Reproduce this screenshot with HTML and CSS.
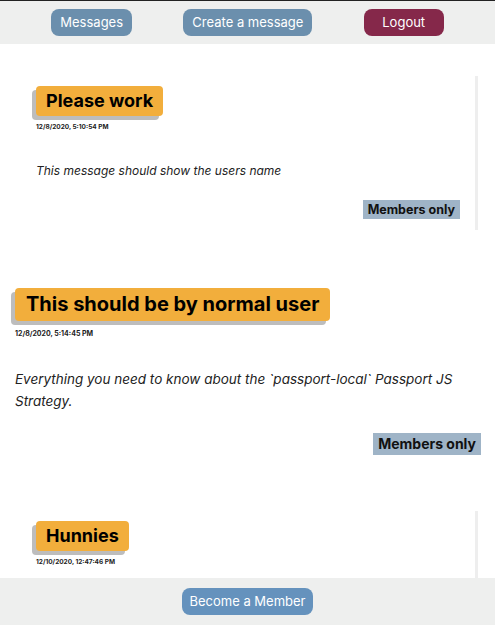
FILE: index.html
```html
<!DOCTYPE html>
<html lang="en">
<head>
    <meta charset="UTF-8">
    <title>Messages</title>
    <link rel="stylesheet" href="styles.css">
</head>
<body>
<nav class="topbar">
    <a class="navBtn" href="#">Messages</a>
    <a class="navBtn" href="#">Create a message</a>
    <a class="navBtn logout" href="#">Logout</a>
</nav>

<div class="list">
    <div class="card small">
        <h2 class="title">Please work</h2>
        <div class="date">12/8/2020, 5:10:54 PM</div>
        <p class="text">This message should show the users name</p>
        <div class="badgeRow"><span class="badge">Members only</span></div>
    </div>

    <div class="card big">
        <h2 class="title">This should be by normal user</h2>
        <div class="date">12/8/2020, 5:14:45 PM</div>
        <p class="text">Everything you need to know about the `passport-local` Passport JS Strategy.</p>
        <div class="badgeRow"><span class="badge">Members only</span></div>
    </div>

    <div class="card small last">
        <h2 class="title">Hunnies</h2>
        <div class="date">12/10/2020, 12:47:46 PM</div>
    </div>
</div>

<footer class="bottombar">
    <a class="navBtn member" href="#">Become a Member</a>
</footer>
</body>
</html>
```

FILE: styles.css
```css
body {
    margin: 0;
    font-family: Inter, "Liberation Sans", sans-serif;
    color: #111;
    background: #fff;
    overflow: hidden;
}

.topbar {
    display: flex;
    justify-content: space-evenly;
    align-items: center;
    height: 43px;
    border-top: 1px solid #222;
    background-color: #eeefee;
}

.navBtn {
    display: inline-block;
    height: 27px;
    line-height: 27px;
    padding: 0 9px;
    border-radius: 8px;
    background-color: #6b8fad;
    color: #fff;
    font-size: 13px;
    text-decoration: none;
}

.logout {
    width: 62px;
    text-align: center;
    background-color: #85284a;
}

.list {
    padding: 0 8px;
}

.card {
    display: flex;
    flex-direction: column;
}

.small {
    margin: 32px 9px 0 14px;
    padding: 10px 15px 11px 14px;
    border-right: 3px solid #eee;
}

.last {
    margin-top: 44px;
    min-height: 60px;
}

.big {
    margin-top: 47px;
    padding: 11px 6px 12px 7px;
}

.title {
    align-self: flex-start;
    margin: 0;
    background-color: #f2ae3c;
    color: #000;
    border-radius: 4px;
    box-shadow: -4px 4px 0 #bdbdbd;
    font-weight: 700;
}

.small .title {
    padding: 0 10px;
    height: 30px;
    line-height: 30px;
    font-size: 18px;
}

.big .title {
    padding: 0 11px;
    height: 33px;
    line-height: 33px;
    font-size: 20px;
}

.date {
    font-weight: 700;
    color: #222;
}

.small .date {
    margin-top: 7px;
    font-size: 6.5px;
}

.big .date {
    margin-top: 8px;
    font-size: 7px;
}

.text {
    font-style: italic;
    color: #222;
}

.small .text {
    margin: 31px 0 0 0;
    font-size: 12px;
    line-height: 18px;
}

.big .text {
    margin: 30px 0 0 0;
    font-size: 13.5px;
    line-height: 22px;
}

.badgeRow {
    display: flex;
    justify-content: flex-end;
}

.badge {
    background-color: #9fb4c7;
    font-weight: 700;
    color: #111;
}

.small .badge {
    margin-top: 20px;
    padding: 0 5px;
    height: 19px;
    line-height: 19px;
    font-size: 12.5px;
}

.big .badge {
    margin-top: 21px;
    padding: 0 5px;
    height: 22px;
    line-height: 22px;
    font-size: 14px;
}

.bottombar {
    position: fixed;
    left: 0;
    right: 0;
    bottom: 0;
    height: 47px;
    display: flex;
    justify-content: center;
    align-items: center;
    background-color: #eeefee;
}

.member {
    padding: 0 7px;
    background-color: #6592bd;
}
```
